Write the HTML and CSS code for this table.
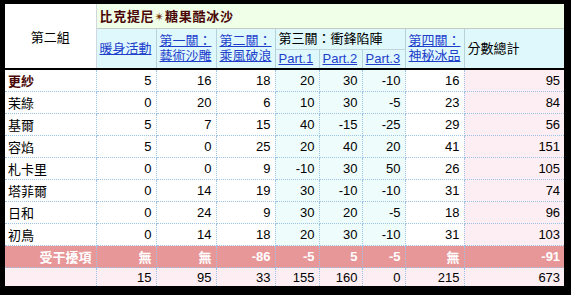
FILE: index.html
```html
<!DOCTYPE html>
<html lang="zh-Hant">
<head>
<meta charset="utf-8">
<title>比克提尼糖果酷冰沙</title>
<link rel="stylesheet" href="styles.css">
</head>
<body>
<table class="score">
  <colgroup>
    <col class="c-name"><col class="c-stage"><col class="c-stage"><col class="c-stage2"><col class="c-part1"><col class="c-part"><col class="c-part"><col class="c-stage2"><col class="c-total">
  </colgroup>
  <thead>
    <tr class="r-title">
      <th class="group" rowspan="3">第二組</th>
      <th class="title" colspan="8">比克提尼<span class="star">✴</span>糖果酷冰沙</th>
    </tr>
    <tr class="r-stage">
      <th class="hd" rowspan="2"><a href="#">暖身活動</a></th>
      <th class="hd" rowspan="2"><a href="#">第一關：<br>藝術沙雕</a></th>
      <th class="hd" rowspan="2"><a href="#">第二關：<br>乘風破浪</a></th>
      <th class="hd stage3" colspan="3">第三關：衝鋒陷陣</th>
      <th class="hd" rowspan="2"><a href="#">第四關：<br>神秘冰品</a></th>
      <th class="hd total-hd" rowspan="2">分數總計</th>
    </tr>
    <tr class="r-part">
      <th class="hd"><a href="#">Part.1</a></th>
      <th class="hd"><a href="#">Part.2</a></th>
      <th class="hd"><a href="#">Part.3</a></th>
    </tr>
  </thead>
  <tbody>
    <tr class="first"><td class="name lead">更紗</td><td>5</td><td>16</td><td>18</td><td class="p">20</td><td class="p">30</td><td class="p">-10</td><td>16</td><td class="t">95</td></tr>
    <tr><td class="name">茉綠</td><td>0</td><td>20</td><td>6</td><td class="p">10</td><td class="p">30</td><td class="p">-5</td><td>23</td><td class="t">84</td></tr>
    <tr><td class="name">基爾</td><td>5</td><td>7</td><td>15</td><td class="p">40</td><td class="p">-15</td><td class="p">-25</td><td>29</td><td class="t">56</td></tr>
    <tr><td class="name">容焰</td><td>5</td><td>0</td><td>25</td><td class="p">20</td><td class="p">40</td><td class="p">20</td><td>41</td><td class="t">151</td></tr>
    <tr><td class="name">札卡里</td><td>0</td><td>0</td><td>9</td><td class="p">-10</td><td class="p">30</td><td class="p">50</td><td>26</td><td class="t">105</td></tr>
    <tr><td class="name">塔菲爾</td><td>0</td><td>14</td><td>19</td><td class="p">30</td><td class="p">-10</td><td class="p">-10</td><td>31</td><td class="t">74</td></tr>
    <tr><td class="name">日和</td><td>0</td><td>24</td><td>9</td><td class="p">30</td><td class="p">20</td><td class="p">-5</td><td>18</td><td class="t">96</td></tr>
    <tr><td class="name">初鳥</td><td>0</td><td>14</td><td>18</td><td class="p">20</td><td class="p">30</td><td class="p">-10</td><td>31</td><td class="t">103</td></tr>
    <tr class="affected"><td>受干擾項</td><td>無</td><td>無</td><td>-86</td><td>-5</td><td>5</td><td>-5</td><td>無</td><td>-91</td></tr>
    <tr class="sum"><td></td><td>15</td><td>95</td><td>33</td><td>155</td><td>160</td><td>0</td><td>215</td><td>673</td></tr>
  </tbody>
</table>
</body>
</html>
```

FILE: styles.css
```css
html, body {
  margin: 0;
}

body {
  background: #000;
  padding: 4px 0 0 5px;
  font-family: "Liberation Sans", "Noto Sans CJK TC", sans-serif;
  font-size: 13px;
  color: #000;
}

.score {
  border-collapse: collapse;
  table-layout: fixed;
  width: 559px;
  background: #fff;
}

.c-name { width: 91px; }
.c-stage { width: 60px; }
.c-stage2 { width: 59px; }
.c-part1 { width: 44px; }
.c-part { width: 43px; }
.c-total { width: 100px; }

th {
  font-weight: normal;
  text-align: left;
  padding: 0 3px;
  vertical-align: middle;
  white-space: nowrap;
  overflow: hidden;
}

th a {
  color: #1d3fcc;
  text-decoration: underline;
}

.group {
  background: #fff;
  text-align: center;
  border-right: 1px solid #cfd8dc;
}

.r-title {
  height: 24px;
}

.title {
  background: #f0ffe8;
  font-weight: bold;
  color: #4a0606;
  border-bottom: 1px solid #c3cbc3;
  padding-left: 3px;
  letter-spacing: 0.7px;
}

.star {
  font-family: "DejaVu Sans", sans-serif;
  color: #7a3a10;
  font-size: 12px;
  font-weight: normal;
}

.r-stage {
  height: 21px;
}

.r-part {
  height: 20px;
}

.hd {
  background: #def8fc;
  line-height: 15px;
  border-right: 1px solid #b7d3da;
}

.stage3 {
  border-bottom: 1px solid #c3d5da;
}

.total-hd {
  border-right: none;
}

td {
  height: 21px;
  padding: 0 4px 0 3px;
  text-align: right;
  vertical-align: middle;
  white-space: nowrap;
  border-right: 1px dotted #9dc3e6;
  border-bottom: 1px dotted #9dc3e6;
}

td:last-child {
  border-right: none;
}

.first td {
  border-top: 2px solid #000;
}

td.name {
  text-align: left;
}

td.lead {
  font-weight: bold;
  color: #4a0606;
}

td.p {
  background: #eefcfc;
}

td.t {
  background: #fdeef3;
}

.affected td {
  background: #e89799;
  color: #fff;
  font-weight: bold;
}

.sum td {
  background: #fdeef3;
  height: 18px;
  border-bottom: none;
}
```
